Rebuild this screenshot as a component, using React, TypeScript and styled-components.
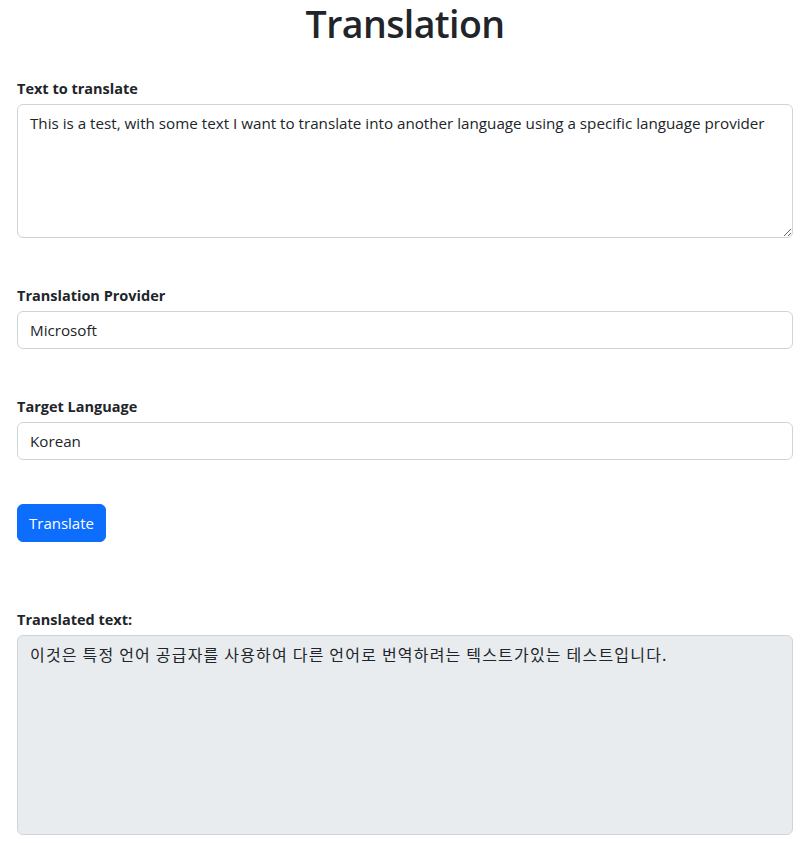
import React from "react";
import styled, { createGlobalStyle } from "styled-components";

const Global = createGlobalStyle`
  html, body { margin: 0; padding: 0; background: #fff; }
  body {
    font-family: "Open Sans", "Noto Sans CJK KR", sans-serif;
    color: #212529;
    font-size: 15px;
  }
  * { box-sizing: border-box; }
`;

const Page = styled.main`
  padding: 0 17px 8px;
  display: flex;
  flex-direction: column;
`;

const Title = styled.h1`
  margin: 0 0 31px;
  padding-top: 2px;
  text-align: center;
  font-size: 37.5px;
  font-weight: 600;
  line-height: 44px;
  letter-spacing: -0.6px;
`;

const Field = styled.div<{ $gap: number }>`
  display: flex;
  flex-direction: column;
  margin-bottom: ${(p) => p.$gap}px;
`;

const Label = styled.label`
  font-weight: 700;
  font-size: 14.5px;
  line-height: 24px;
  margin-bottom: 3px;
`;

const baseControl = `
  width: 100%;
  border: 1px solid #ced4da;
  border-radius: 6px;
  padding: 6px 12px;
  font-family: "Open Sans", "Noto Sans CJK KR", sans-serif;
  font-size: 15.2px;
  line-height: 24px;
  color: #212529;
`;

const TextArea = styled.textarea<{ $h: number; $ro?: boolean }>`
  ${baseControl}
  height: ${(p) => p.$h}px;
  resize: ${(p) => (p.$ro ? "none" : "vertical")};
  background: ${(p) => (p.$ro ? "#e9ecef" : "#fff")};
  outline: none;
`;

const KoreanArea = styled(TextArea)`
  font-family: "Noto Sans CJK KR", sans-serif;
  font-size: 16px;
  letter-spacing: 1.2px;
`;

const Input = styled.input`
  ${baseControl}
  height: 38px;
  background: #fff;
  outline: none;
`;

const Button = styled.button`
  align-self: flex-start;
  height: 38px;
  padding: 6px 11px;
  border: 1px solid #0d6efd;
  border-radius: 6px;
  background: #0d6efd;
  color: #fff;
  font-family: "Open Sans", sans-serif;
  font-size: 15px;
  line-height: 24px;
  margin-bottom: 66px;
  cursor: pointer;
`;

export default function App() {
  return (
    <Page>
      <Global />
      <Title>Translation</Title>
      <Field $gap={46}>
        <Label>Text to translate</Label>
        <TextArea
          $h={134}
          defaultValue="This is a test, with some text I want to translate into another language using a specific language provider"
        />
      </Field>
      <Field $gap={46}>
        <Label>Translation Provider</Label>
        <Input defaultValue="Microsoft" />
      </Field>
      <Field $gap={44}>
        <Label>Target Language</Label>
        <Input defaultValue="Korean" />
      </Field>
      <Button>Translate</Button>
      <Field $gap={0}>
        <Label>Translated text:</Label>
        <KoreanArea
          $h={200}
          $ro
          readOnly
          defaultValue="이것은 특정 언어 공급자를 사용하여 다른 언어로 번역하려는 텍스트가있는 테스트입니다."
        />
      </Field>
    </Page>
  );
}
